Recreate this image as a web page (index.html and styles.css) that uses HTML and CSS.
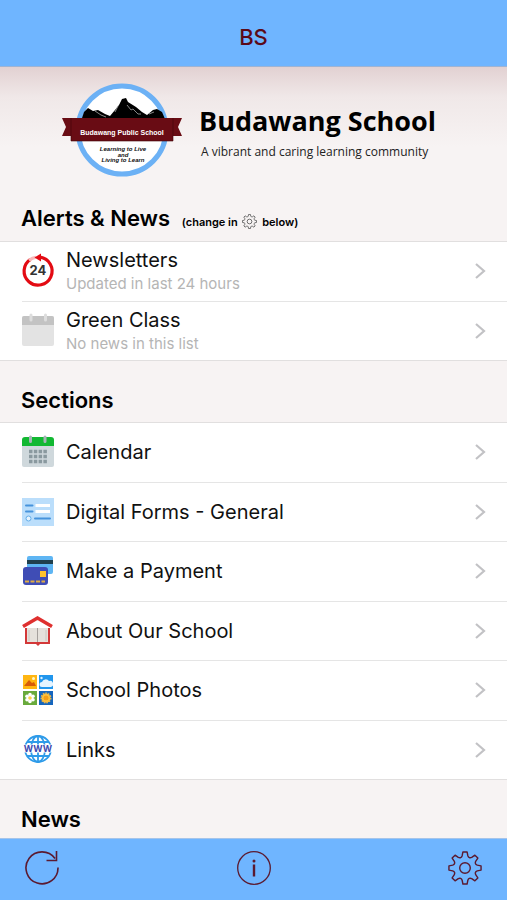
FILE: index.html
```html
<!DOCTYPE html>
<html lang="en">
<head>
    <meta charset="UTF-8">
    <meta name="viewport" content="width=device-width, initial-scale=1.0">
    <title>Budawang School</title>
    <link rel="stylesheet" href="styles.css">
</head>
<body>
<!-- Shared icon shapes -->
<svg class="defs" aria-hidden="true">
    <symbol id="gear" viewBox="-18 -18 36 36">
        <path fill="none" stroke="currentColor" stroke-linejoin="round" d="M-3-13L-2.2-17H2.2L3-13Q4.2-10 7.1-11.3L10.5-13.6 13.6-10.5 11.3-7.1Q10-4.1 13-3L17-2.2V2.2L13 3Q10 4.2 11.3 7.1L13.6 10.5 10.5 13.6 7.1 11.3Q4.1 10 3 13L2.2 17H-2.2L-3 13Q-4.2 10-7.1 11.3L-10.5 13.6-13.6 10.5-11.3 7.1Q-10 4.1-13 3L-17 2.2V-2.2L-13-3Q-10-4.2-11.3-7.1L-13.6-10.5-10.5-13.6-7.1-11.3Q-4.1-10-3-13Z"/>
        <circle r="5.6" fill="none" stroke="currentColor"/>
    </symbol>
    <symbol id="chevron" viewBox="0 0 12 18">
        <path fill="none" stroke="#c2c2c5" stroke-width="2.2" d="M2 2l8 7-8 7"/>
    </symbol>
</svg>

<header class="top-bar">
    <h1>BS</h1>
</header>

<main class="content">
    <div class="hero">
        <svg class="logo" viewBox="0 0 122 96" role="img" aria-label="Budawang Public School logo">
            <circle cx="61" cy="48" r="44" fill="#fff" stroke="#6cb1f5" stroke-width="5"/>
            <path d="M20 39l3-9 4-4 5 3 5-1 7 4 5 2 5-6 4-5 3-6 4-1 2 4 8 5 6 5 5 3 6-5 4-1 5 3 3 7v5H20z" fill="#000"/>
            <path d="M34 29l6 4 5 2M66 23l4 5 2-1 5 5 3 0M57 24l-3 6M88 32l5-2" fill="none" stroke="#aaa" stroke-width=".8"/>
            <path d="M1 36h120l-4 9 4 9H1l4-9z" fill="#690c14"/>
            <path d="M10 37h102v22H10z" fill="#690c14"/>
            <path d="M10 36v23h102V36" fill="none" stroke="#400408" stroke-width=".6"/>
            <text class="logo-name" x="61" y="53">Budawang Public School</text>
            <text class="logo-motto" x="62" y="69">Learning to Live</text>
            <text class="logo-motto" x="62" y="75">and</text>
            <text class="logo-motto" x="62" y="80">Living to Learn</text>
        </svg>
        <div>
            <p class="school-name">Budawang School</p>
            <p class="tagline">A vibrant and caring learning community</p>
        </div>
    </div>

    <h2>Alerts &amp; News <small>(change in <svg class="inline-gear" aria-hidden="true"><use href="#gear"/></svg> below)</small></h2>
    <nav class="list alerts">
        <a class="row" href="#newsletters">
            <svg class="icon" viewBox="0 0 32 32">
                <path d="M18 2.200A14 14 0 1 1 8.500 4.300" fill="none" stroke="#e30b13" stroke-width="3.200"/>
                <path d="M7 5.200q3.500-2.500 7-3" fill="none" stroke="#f8b9ba" stroke-width="3"/>
                <path d="M12.500 2.500L19-1.500v8z" fill="#e30b13"/>
                <text class="icon-24" x="16" y="20">24</text>
            </svg>
            <span class="text">Newsletters<span class="note">Updated in last 24 hours</span></span>
            <svg class="chevron" aria-hidden="true"><use href="#chevron"/></svg>
        </a>
        <a class="row" href="#green-class">
            <svg class="icon" viewBox="0 0 32 32">
                <rect y="1" width="32" height="30" rx="2" fill="#e3e3e3"/>
                <path d="M0 10V3q0-2 2-2h28q2 0 2 2v7z" fill="#c3c3c3"/>
                <path d="M9 0v5M23.500 0v5" stroke="#ddd" stroke-width="3" stroke-linecap="round"/>
            </svg>
            <span class="text">Green Class<span class="note">No news in this list</span></span>
            <svg class="chevron" aria-hidden="true"><use href="#chevron"/></svg>
        </a>
    </nav>

    <h2>Sections</h2>
    <nav class="list sections">
        <a class="row" href="#calendar">
            <svg class="icon" viewBox="0 0 32 32">
                <rect y="2" width="32" height="29" rx="2" fill="#cfd8dc"/>
                <path d="M0 10V4q0-3 3-3h26q3 0 3 3v6z" fill="#12b832"/>
                <path d="M8.500 1v4.500M23 1v4.500" stroke="#a9b4b8" stroke-width="3" stroke-linecap="round"/>
                <path d="M7 15.500h18M7 20.500h18M7 25.500h18" stroke="#8a999f" stroke-width="3.500" stroke-dasharray="3.500 1.300"/>
            </svg>
            <span class="text">Calendar</span>
            <svg class="chevron" aria-hidden="true"><use href="#chevron"/></svg>
        </a>
        <a class="row" href="#forms">
            <svg class="icon" viewBox="0 0 32 32">
                <path d="M0 2h32v28H0z" fill="#bbdefb"/>
                <path d="M13.500 9.500h14.500M13.500 15.500h14.500" stroke="#fff" stroke-width="3.200"/>
                <path d="M4 9.500h6.500M4 15.500h6.500M13 22.500h15" stroke="#4793dc" stroke-width="2" stroke-linecap="round"/>
                <circle cx="6.500" cy="22.500" r="2.500" fill="#e5f3ff" stroke="#62ade9"/>
            </svg>
            <span class="text">Digital Forms - General</span>
            <svg class="chevron" aria-hidden="true"><use href="#chevron"/></svg>
        </a>
        <a class="row" href="#payment">
            <svg class="icon" viewBox="0 0 32 32">
                <rect x="5" y="1" width="26" height="18" rx="2" fill="#5eb5f3"/>
                <path d="M5 5h26v4H5z" fill="#20404d"/>
                <rect x="1" y="12" width="25" height="18" rx="3" fill="#3f4db5"/>
                <path d="M18 16h6v6h-6z" fill="#ffc32e"/>
                <path d="M3 26.500h20" stroke="#dfad45" stroke-width="2" stroke-dasharray="4 1.500"/>
            </svg>
            <span class="text">Make a Payment</span>
            <svg class="chevron" aria-hidden="true"><use href="#chevron"/></svg>
        </a>
        <a class="row" href="#about">
            <svg class="icon" viewBox="0 0 32 32">
                <path d="M3 13h25v16H18l-2 2-2-2H3z" fill="#d33838"/>
                <path d="M5 13h10v14H5zM16 13h10v14H16z" fill="#e5e1db"/>
                <path d="M15.500 13v14" stroke="#a5a09c"/>
                <path d="M7 15v11M24 15v11" stroke="#cbc6c0" stroke-width="1"/>
                <path d="M1 11.500L15.500 3 30 11.500" fill="none" stroke="#df302f" stroke-width="3.500"/>
            </svg>
            <span class="text">About Our School</span>
            <svg class="chevron" aria-hidden="true"><use href="#chevron"/></svg>
        </a>
        <a class="row" href="#photos">
            <svg class="icon" viewBox="0 0 32 32">
                <path d="M1 1h14v14H1z" fill="#ffb612"/>
                <path d="M2 12l5-6 3 3 2-1 2 4z" fill="#d75b08"/>
                <circle cx="11.500" cy="4.500" r="1.500" fill="#fff5c6"/>
                <path d="M17 1h14v14H17z" fill="#2196ed"/>
                <path d="M20 13a2.500 2.500 0 0 1 0-5 4 4 0 0 1 7-1 3 3 0 0 1 2 6z" fill="#e4f4ff"/>
                <circle cx="19.500" cy="4" r="1.200" fill="#d9efff"/>
                <path d="M1 17h14v14H1z" fill="#69aa3c"/>
                <g fill="#fff">
                    <circle cx="8" cy="20.500" r="1.800"/>
                    <circle cx="8" cy="27.500" r="1.800"/>
                    <circle cx="5" cy="22.200" r="1.800"/>
                    <circle cx="11" cy="22.200" r="1.800"/>
                    <circle cx="5" cy="25.800" r="1.800"/>
                    <circle cx="11" cy="25.800" r="1.800"/>
                    <circle cx="8" cy="24" r="3"/>
                </g>
                <circle cx="8" cy="24" r="1.800" fill="#ffd246"/>
                <path d="M17 17h14v14H17z" fill="#1565bd"/>
                <circle cx="24" cy="24" r="4.500" fill="#ffc43d" stroke="#e9b548" stroke-width="2" stroke-dasharray="1.500 1"/>
                <circle cx="24" cy="24" r="2.500" fill="#f59f18"/>
            </svg>
            <span class="text">School Photos</span>
            <svg class="chevron" aria-hidden="true"><use href="#chevron"/></svg>
        </a>
        <a class="row" href="#links">
            <svg class="icon" viewBox="0 0 32 32">
                <g fill="none" stroke="#2e9be9" stroke-width="1.800">
                    <circle cx="16" cy="15" r="13"/>
                    <ellipse cx="16" cy="15" rx="7" ry="13"/>
                    <path d="M16 2v26M5 8h22M5 22h22"/>
                </g>
                <path d="M1 10.500h30v8H1z" fill="#fff"/>
                <text class="icon-www" x="16" y="18">WWW</text>
            </svg>
            <span class="text">Links</span>
            <svg class="chevron" aria-hidden="true"><use href="#chevron"/></svg>
        </a>
    </nav>

    <h2>News</h2>
</main>

<footer class="tool-bar">
    <button type="button" aria-label="Refresh">
        <svg viewBox="0 0 36 36">
            <path d="M34 17.500A16 16 0 1 1 31 8.500M32.500 1v9.500h-10" fill="none" stroke="currentColor" stroke-width="1.600"/>
        </svg>
    </button>
    <button type="button" aria-label="Information">
        <svg viewBox="0 0 36 36">
            <circle cx="18" cy="18" r="16.300" fill="none" stroke="currentColor" stroke-width="1.300"/>
            <path d="M18 14.500v12" stroke="currentColor" stroke-width="2.400"/>
            <circle cx="18" cy="11" r="1.500" fill="currentColor"/>
        </svg>
    </button>
    <button type="button" aria-label="Settings">
        <svg class="settings-gear"><use href="#gear"/></svg>
    </button>
</footer>
</body>
</html>
```

FILE: styles.css
```css
* {
    box-sizing: border-box;
}
body {
    margin: 0;
    height: 100vh;
    display: flex;
    flex-direction: column;
    font-family: Inter, "Liberation Sans", sans-serif;
    color: #111;
    background-color: #f7f3f3;
}
h1, h2, p {
    margin: 0;
}
.defs {
    display: none;
}
.top-bar {
    flex: none;
    height: 67px;
    padding-top: 8px;
    display: flex;
    align-items: center;
    justify-content: center;
    background-color: #6fb5ff;
    border-bottom: 1px solid #9fb4d4;
    color: #5b0a18;
}
.top-bar h1 {
    font-size: 22px;
    line-height: 28px;
    font-weight: 500;
}
.content {
    flex: 1;
    min-height: 0;
    overflow: hidden;
}
.hero {
    display: flex;
    align-items: center;
    justify-content: center;
    gap: 16px;
    height: 128px;
    padding: 0 10px 2px 0;
    background: linear-gradient(#e2d1d2, #f0e8e8 30px, #f7f3f3 80px);
}
.logo {
    flex: none;
    width: 122px;
    height: 96px;
}
.logo-name, .logo-motto {
    font-family: "Liberation Sans", Arial, sans-serif;
    font-weight: bold;
    text-anchor: middle;
}
.logo-name {
    font-size: 7px;
    fill: #fff;
}
.logo-motto {
    font-size: 6px;
    font-style: italic;
    fill: #111;
}
.school-name, .tagline {
    font-family: "Open Sans", sans-serif;
}
.school-name {
    padding-top: 8px;
    font-size: 27px;
    line-height: 36px;
    font-weight: bold;
    color: #000;
}
.tagline {
    padding-left: 2px;
    font-size: 12px;
    line-height: 26px;
    color: #222;
}
h2 {
    padding: 8px 21px;
    font-size: 22px;
    line-height: 30px;
    font-weight: 600;
    color: #000;
}
.hero + h2 {
    padding-bottom: 4px;
}
h2 small {
    margin-left: 6px;
    font-size: 11px;
}
.list + h2 {
    padding: 24px 21px 7px;
}
.inline-gear {
    width: 15px;
    height: 15px;
    margin: 0 2px;
    vertical-align: -3px;
    stroke-width: 2px;
    color: #555;
}
.list {
    display: flex;
    flex-direction: column;
    background-color: #fff;
    border-top: 1px solid #e1dfdf;
    border-bottom: 1px solid #e1dfdf;
}
.alerts {
    min-height: 120px;
}
.sections {
    min-height: 358px;
}
.row {
    flex: 1;
    display: flex;
    align-items: center;
    gap: 12px;
    margin-left: 22px;
    padding-right: 21px;
    border-bottom: 1px solid #e5e5e5;
    color: #111;
    text-decoration: none;
}
.row:last-child {
    border-bottom: none;
}
.icon {
    flex: none;
    width: 32px;
    height: 32px;
    overflow: visible;
}
.icon-24 {
    font-size: 13px;
    font-weight: bold;
    text-anchor: middle;
    fill: #333;
}
.icon-www {
    font-size: 9px;
    font-weight: bold;
    text-anchor: middle;
    fill: #3d49b0;
}
.text {
    flex: 1;
    font-size: 20px;
    line-height: 26px;
}
.note {
    display: block;
    font-size: 15px;
    line-height: 22px;
    color: #b5b5b5;
}
.chevron {
    flex: none;
    width: 12px;
    height: 18px;
}
.tool-bar {
    flex: none;
    height: 62px;
    padding: 0 24px 4px;
    display: flex;
    align-items: center;
    justify-content: space-between;
    background-color: #6fb5ff;
    border-top: 1px solid #a5c4ea;
}
.tool-bar button {
    width: 36px;
    height: 36px;
    padding: 0;
    border: none;
    background: none;
    color: #5b1a30;
    cursor: pointer;
}
.tool-bar svg {
    display: block;
    width: 36px;
    height: 36px;
}
.tool-bar .settings-gear {
    padding: 1px;
    stroke-width: 1.5;
}
```
